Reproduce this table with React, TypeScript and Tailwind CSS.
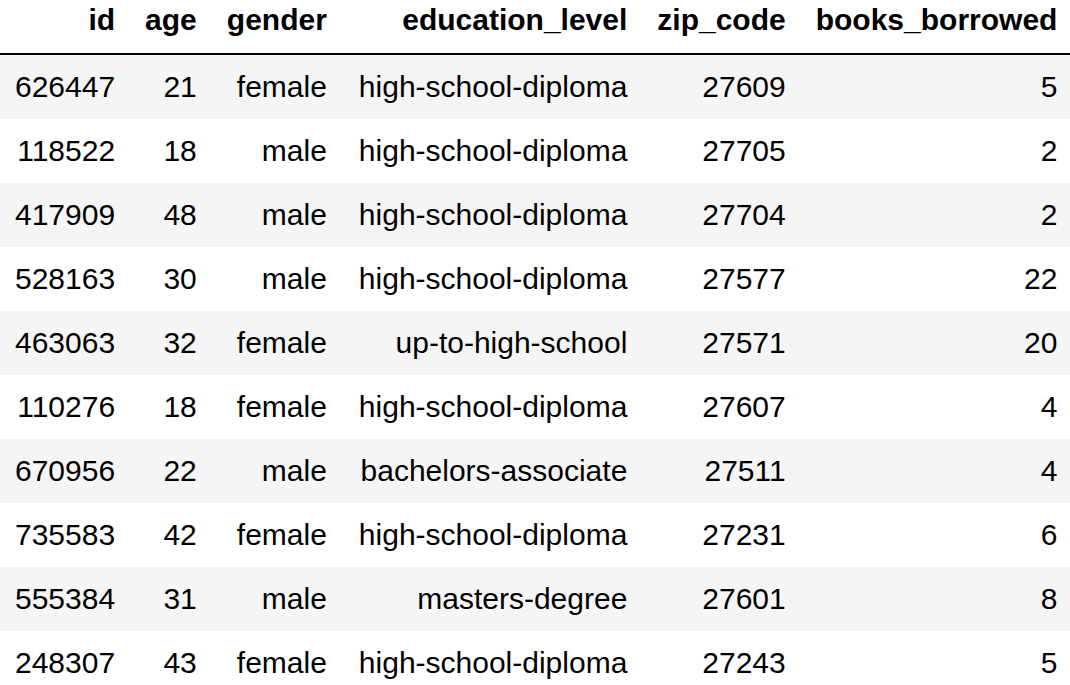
const columns = ["id", "age", "gender", "education_level", "zip_code", "books_borrowed"];

const rows: (string | number)[][] = [
  [626447, 21, "female", "high-school-diploma", 27609, 5],
  [118522, 18, "male", "high-school-diploma", 27705, 2],
  [417909, 48, "male", "high-school-diploma", 27704, 2],
  [528163, 30, "male", "high-school-diploma", 27577, 22],
  [463063, 32, "female", "up-to-high-school", 27571, 20],
  [110276, 18, "female", "high-school-diploma", 27607, 4],
  [670956, 22, "male", "bachelors-associate", 27511, 4],
  [735583, 42, "female", "high-school-diploma", 27231, 6],
  [555384, 31, "male", "masters-degree", 27601, 8],
  [248307, 43, "female", "high-school-diploma", 27243, 5],
];

// education_level renders a touch wider in the reference
const padX = (j: number) => (j === 3 ? "pl-[17px] pr-[15px]" : "px-[15px]");

export default function App() {
  return (
    <div className="w-[1070px] h-[685px] overflow-hidden bg-white text-black font-['Liberation_Sans',Arial,sans-serif] text-[30px]">
      <table className="border-collapse whitespace-nowrap">
        <thead>
          <tr className="border-b-2 border-black">
            {columns.map((c, j) => (
              <th key={c} className={`text-right font-bold align-bottom ${padX(j)} pt-[3px] pb-[16px] leading-[34px]`}>
                {c}
              </th>
            ))}
          </tr>
        </thead>
        <tbody>
          {rows.map((r, i) => (
            <tr key={i} className={i % 2 === 0 ? "bg-[#f5f5f5]" : "bg-white"}>
              {r.map((v, j) => (
                <td key={j} className={`text-right ${padX(j)} py-[15px] leading-[34px]`}>
                  {v}
                </td>
              ))}
            </tr>
          ))}
        </tbody>
      </table>
    </div>
  );
}
